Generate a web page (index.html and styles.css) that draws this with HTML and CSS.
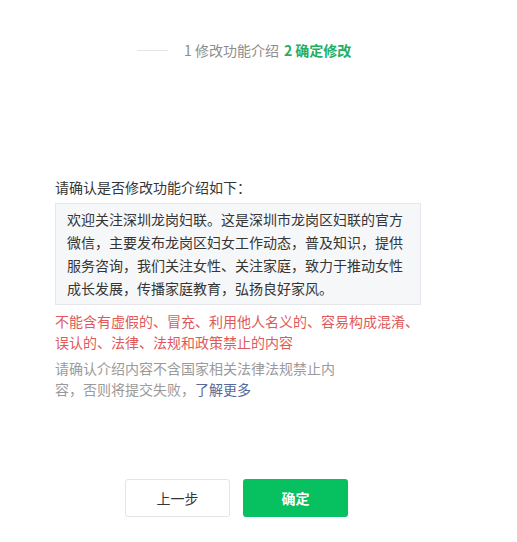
FILE: index.html
```html
<!DOCTYPE html>
<html lang="zh-CN">

<head>
    <meta charset="UTF-8">
    <title>修改功能介绍</title>
    <link rel="stylesheet" href="styles.css">
</head>

<body>
    <div class="steps">
        <span class="steps-line"></span>
        <span class="step">1 修改功能介绍</span>
        <span class="step current">2 确定修改</span>
    </div>

    <div class="confirm">
        <p class="confirm-title">请确认是否修改功能介绍如下：</p>
        <div class="intro-box">
            欢迎关注深圳龙岗妇联。这是深圳市龙岗区妇联的官方微信，主要发布龙岗区妇女工作动态，普及知识，提供服务咨询，我们关注女性、关注家庭，致力于推动女性成长发展，传播家庭教育，弘扬良好家风。
        </div>
        <p class="warn">不能含有虚假的、冒充、利用他人名义的、容易构成混淆、误认的、法律、法规和政策禁止的内容</p>
        <p class="tips">请确认介绍内容不含国家相关法律法规禁止内容，否则将提交失败，<a href="#" class="link">了解更多</a></p>
    </div>

    <div class="actions">
        <button type="button" class="btn btn-default">上一步</button>
        <button type="button" class="btn btn-primary">确定</button>
    </div>
</body>

</html>
```

FILE: styles.css
```css
body {
    margin: 0;
    font-family: "Noto Sans CJK SC", "Liberation Sans", sans-serif;
    font-size: 14px;
    color: #353535;
    background: #ffffff;
}

.steps {
    display: flex;
    align-items: center;
    padding: 40px 0 0 137px;
    height: 21px;
    line-height: 21px;
    color: #8d8d8d;
}

.steps-line {
    width: 31px;
    height: 1px;
    background: #e4e4e6;
    margin-right: 16px;
}

.step {
    margin-right: 5px;
}

.step.current {
    color: #25ad63;
    font-weight: bold;
}

.confirm {
    width: 366px;
    margin: 116px 0 0 55px;
}

.confirm-title {
    margin: 0 0 5px;
    line-height: 21px;
}

.intro-box {
    background: #f6f7f9;
    border: 1px solid #e7e7eb;
    padding: 4px 11px;
    line-height: 23px;
    color: #353535;
}

.warn {
    margin: 6px 0 0;
    line-height: 21px;
    color: #e05a5a;
}

.tips {
    width: 290px;
    margin: 5px 0 0;
    line-height: 21px;
    color: #9a9a9a;
}

.link {
    color: #576b95;
    text-decoration: none;
}

.actions {
    display: flex;
    gap: 13px;
    margin: 79px 0 0 125px;
}

.btn {
    width: 105px;
    height: 38px;
    font-family: inherit;
    font-size: 14px;
    border-radius: 3px;
    cursor: pointer;
}

.btn-default {
    background: #ffffff;
    border: 1px solid #e4e4e6;
    color: #353535;
}

.btn-primary {
    background: #07c160;
    border: none;
    color: #ffffff;
    font-weight: bold;
}
```
